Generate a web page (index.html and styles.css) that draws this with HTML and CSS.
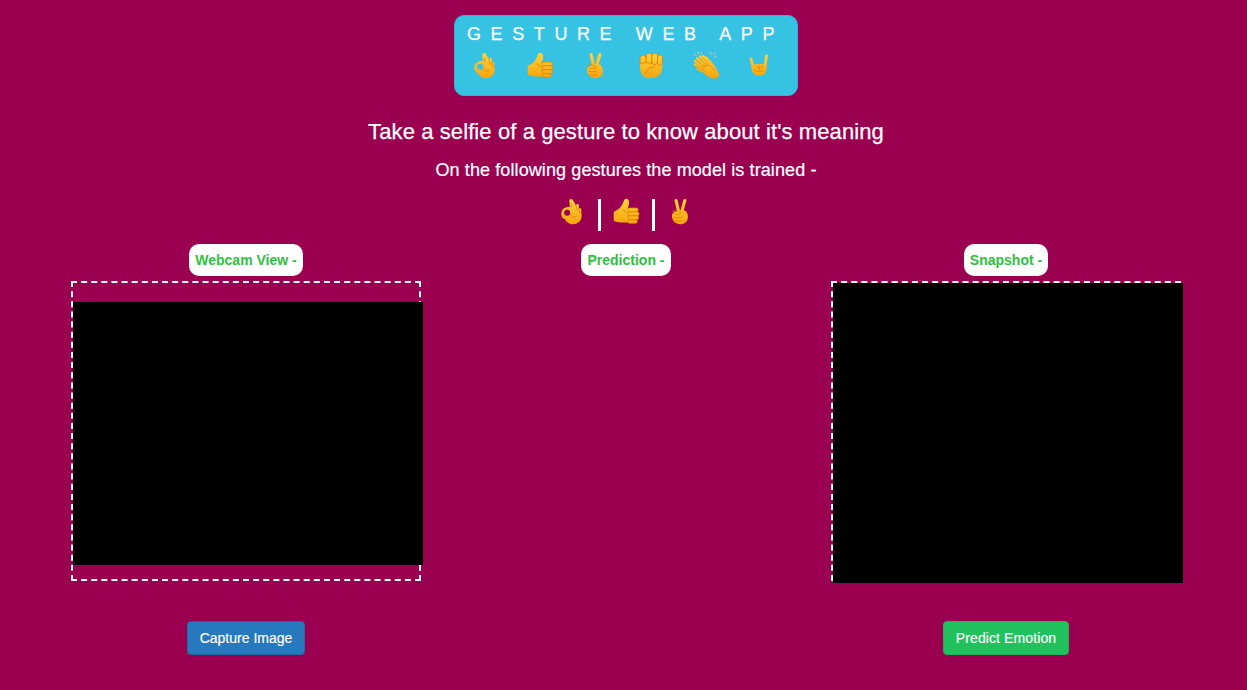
FILE: index.html
```html
<!DOCTYPE html>
<html lang="en">
<head>
    <meta charset="UTF-8">
    <meta name="viewport" content="width=device-width, initial-scale=1.0">
    <title>Gesture Web App</title>
    <link rel="stylesheet" href="styles.css">
</head>
<body>
    <!-- emoji shapes, used with <use> further down -->
    <svg class="sprites" aria-hidden="true">
        <defs>
            <linearGradient id="skin" gradientUnits="userSpaceOnUse" x1="0" y1="2" x2="0" y2="32">
                <stop offset="0" stop-color="#ffd23a"/>
                <stop offset="1" stop-color="#f7a30c"/>
            </linearGradient>
            <symbol id="e-ok" viewBox="0 0 32 32">
                <path fill="url(#skin)" fill-rule="evenodd" d="M14 2.500C15.500 1.500 17 3 18 5L20.500 9.500 21.500 8C23.500 7.500 24.500 9.500 24 11L23.500 13 25 12.500C27 13 27 15 26.500 16L27 22C27 27 23 31 17.500 31 12 31 9 28 8 25 5 25 3 21 4 17 5 13 9 11 13.500 11.500L13 5C12.800 4 13 3 14 2.500ZM10.500 14.500A3.500 3.500 0 1 0 10.500 21.500 3.500 3.500 0 1 0 10.500 14.500Z"/>
                <path d="M15.500 12 15 8M20.500 9.500 22 15M23.500 13 25 18M14 20C15 23 18 24 21 22" stroke="#d98206" stroke-width=".9" fill="none" stroke-linecap="round"/>
            </symbol>
            <symbol id="e-thumb" viewBox="0 0 32 32">
                <path d="M2 17C5 15 8 14 10 11 12 8 13 6 14 3 16 1 19 2 19.500 5 20 8 18.500 11 18 13H25V29H11C7 29 4 28 2 27Z" fill="url(#skin)"/>
                <g fill="url(#skin)" stroke="#d98206" stroke-width=".8">
                    <rect x="18" y="12.500" width="12" height="4.500" rx="2.200"/>
                    <rect x="18" y="17" width="13" height="4.500" rx="2.200"/>
                    <rect x="18" y="21.500" width="12.500" height="4.500" rx="2.200"/>
                    <rect x="18" y="26" width="11" height="4" rx="2"/>
                </g>
                <path d="M12 15C14 15 16 16 17 19" stroke="#d98206" stroke-width=".8" fill="none"/>
            </symbol>
            <symbol id="e-victory" viewBox="0 0 32 32">
                <path d="M14.500 17 11.500 4M18 17 21.500 4" stroke="url(#skin)" stroke-width="3.600" stroke-linecap="round" fill="none"/>
                <path d="M7 20C9 16 14 15 19 15 23 15 25 18 25 23 25 28 21 31 16 31 10 31 6 26 7 20Z" fill="url(#skin)"/>
                <path d="M7 17C10 15 15 16 17 18 17 20 14 20 10 19.500M9 23C12 24 15 24 18 23M10 27C13 28 15 28 18 27" stroke="#d98206" stroke-width=".9" fill="none" stroke-linecap="round"/>
            </symbol>
            <symbol id="e-fist" viewBox="0 0 32 32">
                <path d="M3.500 14C3 20 4 24 6 27 9 30 12 31 16 31 24 31 29 26 29 17V13Z" fill="url(#skin)"/>
                <g fill="url(#skin)" stroke="#d98206" stroke-width=".9">
                    <rect x="3.500" y="5" width="7" height="11" rx="3.200"/>
                    <rect x="10.500" y="2.500" width="6.500" height="13" rx="3.200"/>
                    <rect x="17" y="2.500" width="6.500" height="13" rx="3.200"/>
                    <rect x="23.500" y="4.500" width="5.500" height="12" rx="2.700"/>
                </g>
                <path d="M3.500 14C8 13 16 13 19.500 15 21.500 17 19 19.500 15 19 12 20.500 10 23 10 26" stroke="#d98206" stroke-width="1" fill="url(#skin)" stroke-linecap="round"/>
            </symbol>
            <symbol id="e-clap" viewBox="0 0 32 32">
                <path d="M16 18 6 8.500M18 16 9.500 6.500M20 14 13 6M22 14 16 7.500M14 20 3.500 11.500M15 23 3.500 15.500M17 25 6.500 20" stroke="url(#skin)" stroke-width="3" stroke-linecap="round" fill="none"/>
                <path d="M12 14C16 10 23 11 26 17L31 26C31.500 29 28 32 25 31.500 20 31 14 27 10 21Z" fill="url(#skin)"/>
                <path d="M5 10 15 19M8 8 17 16.500M11.500 7 19 15M4 13.500 14 21.500M4.500 17.500 15 24M13 17C18 15 22 17 25 22" stroke="#d98206" stroke-width=".7" fill="none" stroke-linecap="round"/>
                <path d="M3 3 4.500 5M7 1V3.500M11 1.500 10.500 3.500M22 1.500 21 3.500M26 2 24.500 4M28 6 26 7" stroke="#f4c9a0" stroke-width="1" stroke-linecap="round"/>
            </symbol>
            <symbol id="e-horns" viewBox="0 0 32 32">
                <path d="M8 18 5.500 8M24 18 26 4" stroke="url(#skin)" stroke-width="3.800" stroke-linecap="round" fill="none"/>
                <path d="M6 17C9 14 21 14 26 16 27 22 26 30 16 30 8 30 6 24 6 17Z" fill="url(#skin)"/>
                <path d="M12 17C14 20 17 22 20 19M16 16V22M20 16V19M10 22C13 25 18 26 22 23" stroke="#d98206" stroke-width=".9" fill="none" stroke-linecap="round"/>
            </symbol>
        </defs>
    </svg>

    <div class="page">
        <div class="banner">
            <div class="banner-title">GESTURE WEB APP</div>
            <div class="banner-icons">
                <svg class="emoji"><use href="#e-ok"/></svg>
                <svg class="emoji"><use href="#e-thumb"/></svg>
                <svg class="emoji"><use href="#e-victory"/></svg>
                <svg class="emoji"><use href="#e-fist"/></svg>
                <svg class="emoji"><use href="#e-clap"/></svg>
                <svg class="emoji emoji-small"><use href="#e-horns"/></svg>
            </div>
        </div>

        <h2 class="lead">Take a selfie of a gesture to know about it's meaning</h2>
        <h3 class="sub">On the following gestures the model is trained -</h3>

        <div class="trained">
            <svg class="emoji"><use href="#e-ok"/></svg>
            <span class="bar"></span>
            <svg class="emoji"><use href="#e-thumb"/></svg>
            <span class="bar"></span>
            <svg class="emoji"><use href="#e-victory"/></svg>
        </div>

        <div class="columns">
            <div class="col">
                <div class="pill">Webcam View -</div>
                <div class="frame">
                    <div class="video"></div>
                </div>
                <button class="btn btn-blue">Capture Image</button>
            </div>
            <div class="col">
                <div class="pill">Prediction -</div>
            </div>
            <div class="col">
                <div class="pill">Snapshot -</div>
                <div class="frame">
                    <div class="snapshot"></div>
                </div>
                <button class="btn btn-green">Predict Emotion</button>
            </div>
        </div>
    </div>
</body>
</html>
```

FILE: styles.css
```css
body {
    margin: 0;
    background-color: #9b0050;
    color: #fff;
    font-family: "Liberation Sans", Arial, sans-serif;
}

.sprites {
    display: block;
    width: 0;
    height: 0;
}

.page {
    display: flex;
    flex-direction: column;
    align-items: center;
    padding-top: 15px;
    padding-left: 5px;
}

.banner {
    box-sizing: border-box;
    width: 344px;
    height: 81px;
    padding: 8px 12px 0;
    background-color: #36c2e2;
    border: 1px solid #2bb4d6;
    border-radius: 10px;
}

.banner-title {
    font-size: 18px;
    line-height: 21px;
    letter-spacing: 9.6px;
    white-space: nowrap;
    -webkit-text-stroke: .25px #fff;
}

.banner-icons {
    display: flex;
    justify-content: space-between;
    align-items: center;
    margin-top: 6px;
    padding: 0 14px 0 4px;
}

.banner-icons .emoji {
    width: 28px;
    height: 28px;
}

.banner-icons .emoji-small {
    width: 24px;
    height: 24px;
}

.lead {
    margin: 22px 0 0;
    font-size: 22px;
    line-height: 28px;
    letter-spacing: .1px;
    font-weight: normal;
    -webkit-text-stroke: .25px #fff;
}

.sub {
    margin: 12px 0 0;
    font-size: 18px;
    line-height: 24px;
    letter-spacing: .1px;
    font-weight: normal;
    -webkit-text-stroke: .2px #fff;
}

.trained {
    display: flex;
    align-items: center;
    gap: 11.5px;
    height: 32px;
    margin-top: 17px;
}

.trained .emoji {
    width: 28px;
    height: 28px;
    margin-bottom: 8px;
}

.bar {
    width: 3px;
    height: 32px;
    background-color: #fff;
}

.columns {
    display: flex;
    width: 1140px;
    margin-top: 13px;
}

.col {
    display: flex;
    flex-direction: column;
    align-items: center;
    width: 380px;
}

.pill {
    padding: 0 6px;
    height: 32px;
    line-height: 32px;
    background-color: #fff;
    border-radius: 10px;
    color: #2fbf3f;
    font-size: 14px;
    font-weight: bold;
}

.frame {
    box-sizing: border-box;
    width: 350px;
    height: 300px;
    margin-top: 5px;
    border: 2px dashed #fff;
}

.video {
    width: 350px;
    height: 263px;
    margin-top: 19px;
    background-color: #000;
}

.snapshot {
    width: 350px;
    height: 300px;
    background-color: #000;
}

.btn {
    box-sizing: border-box;
    height: 34px;
    margin-top: 40px;
    padding: 0 12px;
    color: #fff;
    font-family: inherit;
    font-size: 14px;
    border: 1px solid transparent;
    border-radius: 4px;
    -webkit-text-stroke: .15px #fff;
}

.btn-blue {
    background-color: #2779bd;
    border-color: #2368a6;
}

.btn-green {
    background-color: #21c25e;
    border-color: #1fb356;
    letter-spacing: .1px;
}
```
